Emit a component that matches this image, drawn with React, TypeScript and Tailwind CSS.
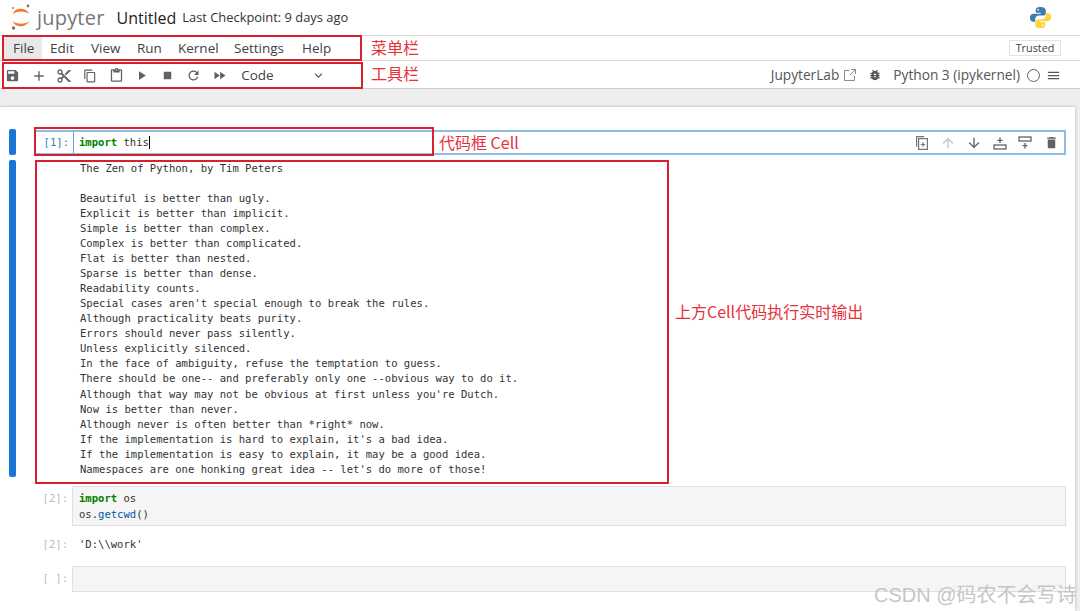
import type { ReactNode } from 'react'
import {
  MdAdd,
  MdArrowDownward,
  MdArrowUpward,
  MdBugReport,
  MdContentCopy,
  MdContentCut,
  MdContentPaste,
  MdDelete,
  MdFastForward,
  MdKeyboardArrowDown,
  MdMenu,
  MdPlayArrow,
  MdRefresh,
  MdSave,
  MdStop,
} from 'react-icons/md'

const menuItems = [
  { label: 'File', className: 'w-[38px] bg-[#e8e8e8] pl-[9px]' },
  { label: 'Edit', className: 'w-[41px] pl-[8px]' },
  { label: 'View', className: 'w-[46px] pl-[8px]' },
  { label: 'Run', className: 'w-[41px] pl-[8px]' },
  { label: 'Kernel', className: 'w-[56px] pl-[8px]' },
  { label: 'Settings', className: 'w-[68px] pl-[8px]' },
  { label: 'Help', className: 'w-[50px] pl-[8px]' },
]

const zenLines = [
  'The Zen of Python, by Tim Peters',
  '',
  'Beautiful is better than ugly.',
  'Explicit is better than implicit.',
  'Simple is better than complex.',
  'Complex is better than complicated.',
  'Flat is better than nested.',
  'Sparse is better than dense.',
  'Readability counts.',
  "Special cases aren't special enough to break the rules.",
  'Although practicality beats purity.',
  'Errors should never pass silently.',
  'Unless explicitly silenced.',
  'In the face of ambiguity, refuse the temptation to guess.',
  'There should be one-- and preferably only one --obvious way to do it.',
  "Although that way may not be obvious at first unless you're Dutch.",
  'Now is better than never.',
  'Although never is often better than *right* now.',
  "If the implementation is hard to explain, it's a bad idea.",
  'If the implementation is easy to explain, it may be a good idea.',
  "Namespaces are one honking great idea -- let's do more of those!",
]

const uiFont = "font-['Open_Sans','Noto_Sans',sans-serif]"
const monoFont = "font-['DejaVu_Sans_Mono',monospace]"
const cjkFont = "font-['Noto_Sans_CJK_SC',sans-serif]"

function ToolButton({ children }: { children: ReactNode }) {
  return <span className="flex w-[25.8px] items-center justify-center text-[#616161]">{children}</span>
}

function JupyterLogo() {
  return (
    <svg width="20" height="30" viewBox="0 0 20 30" className="shrink-0">
      <path d="M1.500 11 C4 4 15 4 18.500 11 C15 7.500 5 7.500 1.500 11 Z" fill="#f37726" />
      <path d="M1.500 18 C4 25 15 25 18.500 18 C15 21.500 5 21.500 1.500 18 Z" fill="#f37726" />
      <circle cx="17" cy="3" r="1.400" fill="#767677" />
      <circle cx="2" cy="5" r="0.900" fill="#767677" />
      <circle cx="2.500" cy="25" r="1.700" fill="#767677" />
    </svg>
  )
}

function PythonLogo() {
  return (
    <svg width="23" height="23" viewBox="0 0 24 24">
      <path
        d="M12 1C8 1 7 2.500 7 4.500V7h5.200v1H4.500C2.300 8 1 9.800 1 12.300c0 2.600 1.300 4.200 3.400 4.200H6.500v-2.800c0-2 1.700-3.700 3.700-3.700h4.600c1.500 0 2.700-1.300 2.700-2.800V4.500C17.500 2.600 15.700 1 12 1Z"
        fill="#3f7cad"
      />
      <path
        d="M12 23c4 0 5-1.500 5-3.500V17h-5.200v-1h7.700c2.200 0 3.500-1.800 3.500-4.300 0-2.600-1.300-4.200-3.400-4.200h-2.100v2.800c0 2-1.700 3.700-3.700 3.700H9.200c-1.500 0-2.700 1.300-2.700 2.800v3.700C6.500 21.400 8.300 23 12 23Z"
        fill="#ffd43b"
      />
      <circle cx="9.500" cy="4" r="0.900" fill="#fff" />
      <circle cx="14.500" cy="20" r="0.900" fill="#fff" />
    </svg>
  )
}

function DuplicateIcon() {
  return (
    <svg width="12" height="14" viewBox="0 0 12 14" fill="none" stroke="#757575" strokeWidth="1.200">
      <path d="M.6 10.500V.6h7.500" />
      <rect x="2.600" y="2.600" width="8.800" height="10.800" />
      <path d="M7 6.300v4.400M4.800 8.500h4.400" />
    </svg>
  )
}

function InsertAboveIcon() {
  return (
    <svg width="14" height="14" viewBox="0 0 14 14" fill="none" stroke="#616161" strokeWidth="1.300">
      <rect x="1" y="9" width="12" height="4" />
      <path d="M7 1.500v5.500M4.500 4.300h5" />
    </svg>
  )
}

function InsertBelowIcon() {
  return (
    <svg width="14" height="14" viewBox="0 0 14 14" fill="none" stroke="#616161" strokeWidth="1.300">
      <rect x="1" y="1" width="12" height="4" />
      <path d="M7 7v5.500M4.500 9.700h5" />
    </svg>
  )
}

function LaunchIcon() {
  return (
    <svg width="12" height="12" viewBox="0 0 12 12" fill="none" stroke="#8a8a8a" strokeWidth="1">
      <path d="M5 1.500H.5v10h10V7" />
      <path d="M7 .5h4.500V5M11.500 .5L6 6" />
    </svg>
  )
}

function Prompt({ children, active }: { children: ReactNode; active?: boolean }) {
  return (
    <div
      className={`w-[37px] shrink-0 whitespace-pre pr-[4px] text-right text-[10.56px] ${active ? 'text-[#307fc1]' : 'text-[#bdbdbd]'}`}
    >
      {children}
    </div>
  )
}

function RedBox({ className }: { className: string }) {
  return <div className={`pointer-events-none absolute border-2 border-[#d91f2b] ${className}`} />
}

function Note({ className, children }: { className: string; children: ReactNode }) {
  return (
    <div className={`absolute whitespace-nowrap text-[16px] leading-[20px] text-[#e8303a] ${cjkFont} ${className}`}>
      {children}
    </div>
  )
}

export default function App() {
  return (
    <div className={`relative h-[611px] w-[1080px] overflow-hidden bg-white ${uiFont}`}>
      {/* Title row */}
      <div className="flex h-[36px] items-center border-b border-[#d6d6d6] pl-[11px] pr-[28px]">
        <JupyterLogo />
        <span className="ml-[6px] text-[20px] tracking-[0.2px] text-[#767677]">jupyter</span>
        <span className="ml-[12px] text-[16px] text-[#222]">Untitled</span>
        <span className="ml-[6px] text-[12.9px] text-[#333]">Last Checkpoint: 9 days ago</span>
        <span className="ml-auto flex">
          <PythonLogo />
        </span>
      </div>

      {/* Menu bar */}
      <div className="flex h-[25px] items-center border-b border-[#d6d6d6] pl-[4px] pr-[19px] text-[13.5px] text-[#424242]">
        {menuItems.map((item) => (
          <span key={item.label} className={`flex h-[24px] items-center ${item.className}`}>
            {item.label}
          </span>
        ))}
        <span className="ml-auto flex h-[16px] w-[52px] items-center justify-center border border-[#e3e3e3] text-[10.8px] text-[#424242]">
          Trusted
        </span>
      </div>

      {/* Toolbar */}
      <div className="flex h-[28px] items-center border-b border-[#cfcfcf] pt-[2px] text-[#616161]">
        <div className="flex">
          <ToolButton><MdSave size={15} /></ToolButton>
          <ToolButton><MdAdd size={16} /></ToolButton>
          <ToolButton><MdContentCut size={16} /></ToolButton>
          <ToolButton><MdContentCopy size={14} /></ToolButton>
          <ToolButton><MdContentPaste size={15} /></ToolButton>
          <ToolButton><MdPlayArrow size={15} /></ToolButton>
          <ToolButton><MdStop size={15} /></ToolButton>
          <ToolButton><MdRefresh size={15} /></ToolButton>
          <ToolButton><MdFastForward size={15} /></ToolButton>
        </div>
        <div className="ml-[9px] flex w-[85px] items-center justify-between text-[13.5px] text-[#424242]">
          Code
          <MdKeyboardArrowDown size={15} className="text-[#616161]" />
        </div>
        <div className="ml-auto flex items-center pr-[19px] text-[13.7px] text-[#555]">
          <span>JupyterLab</span>
          <span className="ml-[5px] flex"><LaunchIcon /></span>
          <span className="ml-[12px] flex"><MdBugReport size={14} /></span>
          <span className="ml-[11px]">Python 3 (ipykernel)</span>
          <span className="ml-[7px] h-[13px] w-[13px] rounded-full border border-[#616161]" />
          <span className="ml-[6px] flex"><MdMenu size={15} /></span>
        </div>
      </div>

      {/* Notebook area */}
      <div className="h-[522px] bg-[#eeeeee] pl-0 pr-[5px] pt-[18px]">
        <div className={`h-full bg-white pl-[9px] pr-[9px] pt-[22px] text-[10.56px] leading-[15.07px] shadow-[0_0_3px_rgba(0,0,0,0.25)] ${monoFont}`}>
          {/* Cell 1 input */}
          <div className="flex h-[26px] items-stretch">
            <div className="w-[7px] shrink-0 rounded-[2px] bg-[#1976d2]" />
            <div className="ml-[18px] mt-[1px] flex min-w-0 flex-1 items-center border-2 border-[#8fbce6]">
              <Prompt active>[1]:</Prompt>
              <div className="flex h-full flex-1 items-center border-l border-[#64a3dc] pl-[5px] text-[#333]">
                <span className="font-bold text-[#008000]">import</span>
                <span className="whitespace-pre"> this</span>
                <span className="h-[13px] w-px bg-black" />
                <div className="ml-auto flex items-center">
                  <span className="flex w-[25.8px] justify-center"><DuplicateIcon /></span>
                  <span className="flex w-[25.8px] justify-center text-[#c4c4c4]"><MdArrowUpward size={16} /></span>
                  <span className="flex w-[25.8px] justify-center text-[#616161]"><MdArrowDownward size={16} /></span>
                  <span className="flex w-[25.8px] justify-center"><InsertAboveIcon /></span>
                  <span className="flex w-[25.8px] justify-center"><InsertBelowIcon /></span>
                  <span className="flex w-[25.8px] justify-center text-[#616161]"><MdDelete size={15} /></span>
                </div>
              </div>
            </div>
          </div>

          {/* Cell 1 output */}
          <div className="mt-[5px] flex h-[317px]">
            <div className="w-[7px] shrink-0 rounded-[2px] bg-[#1976d2]" />
            <pre className="ml-[64px] pt-[0.6px] font-['DejaVu_Sans_Mono',monospace] text-[#333]">{zenLines.join('\n')}</pre>
          </div>

          {/* Cell 2 */}
          <div className="ml-[26px] mt-[9px] flex">
            <Prompt><span className="relative top-[5px]">[2]:</span></Prompt>
            <div className="flex h-[40px] flex-1 flex-col justify-center border border-[#e0e0e0] bg-[#f5f5f5] pl-[6px] text-[#333] leading-[16px]">
              <div className="whitespace-pre"><span className="font-bold text-[#008000]">import</span> os</div>
              <div>os.<span className="text-[#0055aa]">getcwd</span>()</div>
            </div>
          </div>
          <div className="ml-[26px] mt-[11px] flex h-[15px] items-center">
            <Prompt>[2]:</Prompt>
            <span className="ml-[7px] text-[#333]">'D:\\work'</span>
          </div>

          {/* Cell 3 */}
          <div className="ml-[26px] mt-[14px] flex items-center">
            <Prompt>[ ]:</Prompt>
            <div className="h-[26px] flex-1 border border-[#e0e0e0] bg-[#f5f5f5]" />
          </div>
        </div>
      </div>

      {/* Annotations */}
      <RedBox className="left-[2px] top-[35px] h-[26px] w-[360px]" />
      <RedBox className="left-[2px] top-[62px] h-[27px] w-[361px]" />
      <RedBox className="left-[34px] top-[127px] h-[29px] w-[400px]" />
      <RedBox className="left-[35px] top-[160px] h-[324px] w-[634px]" />
      <Note className="left-[371px] top-[37px]">菜单栏</Note>
      <Note className="left-[371px] top-[63px]">工具栏</Note>
      <Note className="left-[439px] top-[132px]">代码框 Cell</Note>
      <Note className="left-[675px] top-[301px]">上方Cell代码执行实时输出</Note>

      {/* Watermark */}
      <div className={`absolute left-[874px] top-[581px] whitespace-nowrap text-[20px] leading-[26px] text-[#c6c6c6] ${cjkFont}`}>
        <span className="font-['Liberation_Sans',sans-serif]">CSDN @</span>码农不会写诗
      </div>
    </div>
  )
}
